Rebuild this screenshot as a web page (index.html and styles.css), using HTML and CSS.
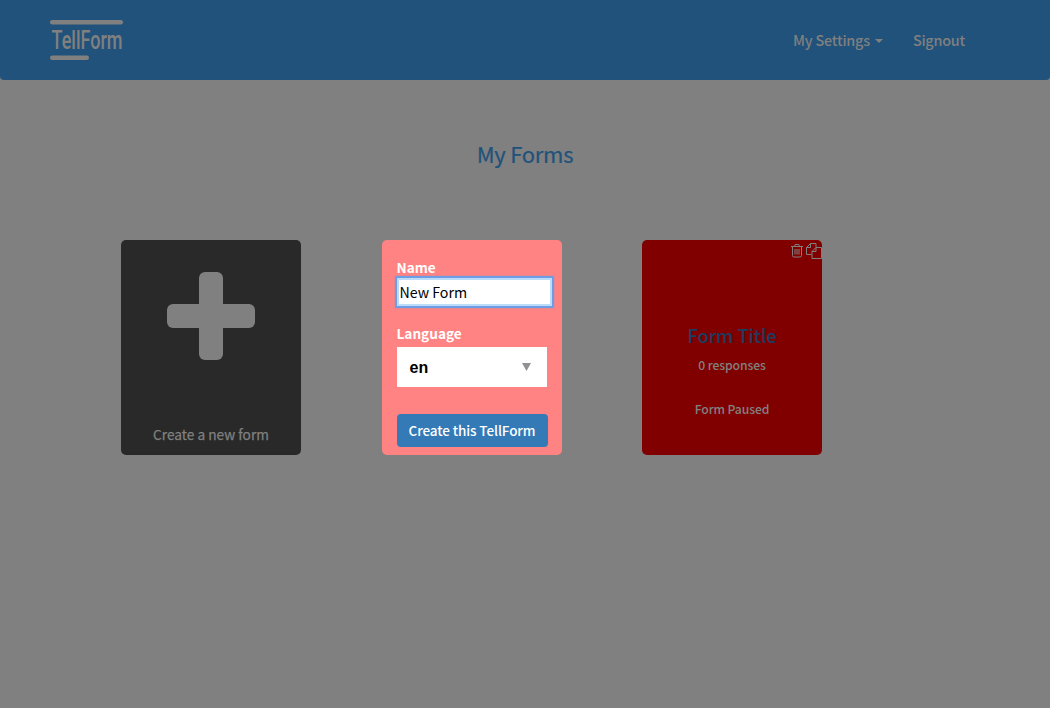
FILE: index.html
```html
<!DOCTYPE html>
<html lang="en">
<head>
<meta charset="utf-8">
<title>TellForm</title>
<link rel="stylesheet" href="styles.css">
</head>
<body>
<header class="navbar">
  <svg class="logo" width="74" height="41" viewBox="0 0 74 41" role="img" aria-label="TellForm">
    <rect x="0" y="0" width="73" height="4.500" rx="2.200"/>
    <text x="1.500" y="29.300" textLength="71" lengthAdjust="spacingAndGlyphs">TellForm</text>
    <rect x="0" y="35.500" width="39" height="4.500" rx="2.200"/>
  </svg>
  <nav class="nav-links">
    <a class="nav-link">My Settings<span class="caret"></span></a>
    <a class="nav-link">Signout</a>
  </nav>
</header>
<main>
  <h3 class="page-title">My Forms</h3>
  <div class="cards">
    <section class="card card-new">
      <svg class="plus" width="88" height="88" viewBox="0 0 88 88">
        <rect x="32" y="0" width="24" height="88" rx="6"/>
        <rect x="0" y="32" width="88" height="24" rx="6"/>
      </svg>
      <p class="card-caption">Create a new form</p>
    </section>
    <form class="card card-create">
      <label class="label" for="name">Name</label>
      <input class="name-input" id="name" type="text" value="New Form">
      <label class="label label-language">Language</label>
      <div class="select"><span>en</span><svg width="9" height="8" viewBox="0 0 9 8"><path d="M0 0h9L4.500 8z"/></svg></div>
      <button class="submit" type="button">Create this TellForm</button>
    </form>
    <section class="card card-form">
      <div class="card-actions">
        <svg width="12" height="15" viewBox="0 0 12 15"><path d="M0 3.500h12M3.500 3.500l.7-2h3.600l.7 2M1.500 3.500v9q0 1.500 1.500 1.500h6q1.500 0 1.500-1.500v-9M4 6v5.500M6 6v5.500M8 6v5.500"/></svg>
        <svg width="16" height="16" viewBox="0 0 16 16"><path d="M5.500 11.500h-5v-7l4-4h5.500v4M4.500.5v4h-4M10 4.500l-4 4v7h9.500v-11zM10 4.500v4h-4"/></svg>
      </div>
      <h4 class="form-title">Form Title</h4>
      <p class="form-meta">0 responses</p>
      <p class="form-meta form-status">Form Paused</p>
    </section>
  </div>
</main>
</body>
</html>
```
FILE: styles.css
```css
* { box-sizing: border-box; }
body {
  margin: 0;
  height: 708px;
  overflow: hidden;
  background: #808080;
  color: #808080;
  font-family: "Noto Sans CJK SC", "Noto Sans", sans-serif;
}
h3, h4, p { margin: 0; }
.navbar {
  display: flex;
  justify-content: space-between;
  height: 80px;
  padding: 20px 85px 0 50px;
  background: #21527b;
  border-radius: 0 0 4px 4px;
}
.logo { fill: #808080; overflow: visible; }
.logo text { font: 500 26px "Roboto", sans-serif; }
.nav-links { display: flex; gap: 30px; }
.nav-link {
  display: flex;
  align-items: center;
  height: 39px;
  font-size: 14.4px;
  font-weight: 500;
  letter-spacing: -0.22px;
}
.caret {
  margin: 3px 0 0 5px;
  border: 4px solid transparent;
  border-top-color: #808080;
  border-bottom: 0;
}
.page-title {
  margin-top: 56px;
  text-align: center;
  font-size: 22px;
  font-weight: 400;
  line-height: 34px;
  letter-spacing: -0.25px;
  color: #21527b;
  -webkit-text-stroke: 0.2px #21527b;
}
.cards {
  display: flex;
  gap: 80.5px;
  margin: 70px 0 0 121px;
}
.card {
  display: flex;
  flex-direction: column;
  width: 180px;
  height: 215px;
  border-radius: 5px;
}
.card-new {
  align-items: center;
  padding-top: 32px;
  background: #292929;
}
.plus { fill: #808080; }
.card-caption {
  margin-top: 64px;
  font-size: 13.7px;
  line-height: 20px;
  -webkit-text-stroke: 0.25px #808080;
}
.card-create {
  align-items: flex-start;
  padding: 17px 0 0 15px;
  background: #ff8383;
}
.label {
  color: #fff;
  font-size: 13.6px;
  font-weight: 700;
  line-height: 20px;
}
.name-input {
  width: 155px;
  height: 28px;
  margin-top: 1px;
  padding: 0 1px;
  border: 2px solid #bcdcfa;
  outline: 0;
  box-shadow: 0 0 1px 2px #6d9de2;
  font: 14.2px "Noto Sans CJK SC", sans-serif;
  color: #000;
}
.label-language { margin-top: 17px; }
.select {
  display: flex;
  justify-content: space-between;
  align-items: center;
  width: 150px;
  height: 40px;
  margin-top: 4px;
  padding: 0 16px 0 13px;
  background: #fff;
  color: #000;
  font: 700 16px "Liberation Sans", sans-serif;
}
.select span { padding-top: 2px; }
.select svg { fill: #919196; }
.submit {
  width: 151px;
  height: 33px;
  margin-top: 27px;
  padding: 0 0 2px;
  border: 0;
  border-radius: 4px;
  background: #337ab7;
  color: #fff;
  font: 500 13.5px "Noto Sans CJK SC", sans-serif;
  letter-spacing: -0.1px;
}
.card-form {
  align-items: center;
  background: #800000;
}
.card-actions {
  display: flex;
  align-self: flex-end;
  gap: 3px;
  height: 24px;
  padding-top: 3px;
}
.card-actions svg { fill: none; stroke: #808080; }
.form-title {
  margin-top: 56px;
  font-size: 18.5px;
  font-weight: 500;
  line-height: 30px;
  letter-spacing: -0.15px;
  color: #1c3c60;
}
.form-meta {
  margin-top: 5px;
  font-size: 12.2px;
  font-weight: 500;
  line-height: 20px;
  letter-spacing: -0.1px;
}
.form-status { margin-top: 24px; }
```
